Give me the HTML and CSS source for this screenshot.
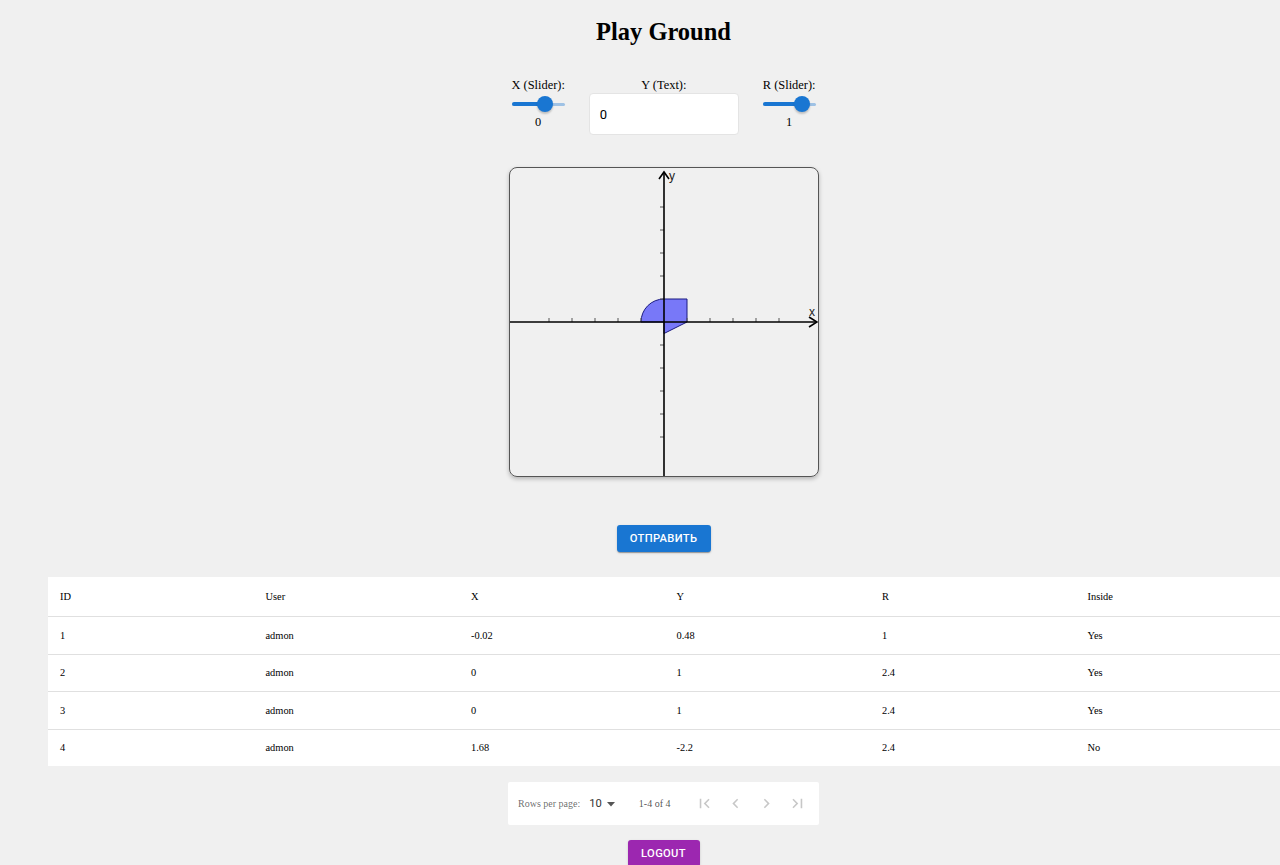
FILE: index.html
```html
<!DOCTYPE html>
<html lang="ru">
<head>
<meta charset="utf-8">
<title>Play Ground</title>
<link rel="stylesheet" href="styles.css">
</head>
<body>
<div class="page">
  <h1 class="title">Play Ground</h1>

  <div class="controls">
    <div class="slider-group">
      <div class="ctl-label">X (Slider):</div>
      <div class="slider">
        <div class="rail"></div>
        <div class="track" style="width:62.5%"></div>
        <div class="thumb" style="left:62.5%"></div>
      </div>
      <div class="ctl-value">0</div>
    </div>
    <div class="text-group">
      <div class="ctl-label">Y (Text):</div>
      <div class="text-field"><span>0</span></div>
    </div>
    <div class="slider-group">
      <div class="ctl-label">R (Slider):</div>
      <div class="slider">
        <div class="rail"></div>
        <div class="track" style="width:75%"></div>
        <div class="thumb" style="left:75%"></div>
      </div>
      <div class="ctl-value">1</div>
    </div>
  </div>

  <div class="graph">
    <svg width="308" height="308" viewBox="0 0 308 308" xmlns="http://www.w3.org/2000/svg">
      <path d="M154,154 L131,154 A23,23 0 0 1 154,131 L177,131 L177,154 L154,165.5 Z" fill="rgba(0,0,255,0.5)" stroke="#1a1a80" stroke-width="1"/>
      <g stroke="#555" stroke-width="1">
        <line x1="39" y1="150" x2="39" y2="154"/>
        <line x1="62" y1="150" x2="62" y2="154"/>
        <line x1="85" y1="150" x2="85" y2="154"/>
        <line x1="108" y1="150" x2="108" y2="154"/>
        <line x1="131" y1="150" x2="131" y2="154"/>
        <line x1="177" y1="150" x2="177" y2="154"/>
        <line x1="200" y1="150" x2="200" y2="154"/>
        <line x1="223" y1="150" x2="223" y2="154"/>
        <line x1="246" y1="150" x2="246" y2="154"/>
        <line x1="269" y1="150" x2="269" y2="154"/>
        <line x1="150" y1="39" x2="154" y2="39"/>
        <line x1="150" y1="62" x2="154" y2="62"/>
        <line x1="150" y1="85" x2="154" y2="85"/>
        <line x1="150" y1="108" x2="154" y2="108"/>
        <line x1="150" y1="131" x2="154" y2="131"/>
        <line x1="150" y1="177" x2="154" y2="177"/>
        <line x1="150" y1="200" x2="154" y2="200"/>
        <line x1="150" y1="223" x2="154" y2="223"/>
        <line x1="150" y1="246" x2="154" y2="246"/>
        <line x1="150" y1="269" x2="154" y2="269"/>
      </g>
      <g stroke="#000" stroke-width="1.6" fill="none">
        <line x1="0" y1="154" x2="307" y2="154"/>
        <polyline points="299,149 307,154 299,159"/>
        <line x1="154" y1="308" x2="154" y2="4"/>
        <polyline points="149,11 154,4 159,11"/>
      </g>
      <text x="299" y="148" class="axis-label">x</text>
      <text x="159" y="12" class="axis-label">y</text>
    </svg>
  </div>

  <button class="btn btn-primary">Отправить</button>

  <table class="results">
    <thead>
      <tr><th>ID</th><th>User</th><th>X</th><th>Y</th><th>R</th><th>Inside</th></tr>
    </thead>
    <tbody>
      <tr><td>1</td><td>admon</td><td>-0.02</td><td>0.48</td><td>1</td><td>Yes</td></tr>
      <tr><td>2</td><td>admon</td><td>0</td><td>1</td><td>2.4</td><td>Yes</td></tr>
      <tr><td>3</td><td>admon</td><td>0</td><td>1</td><td>2.4</td><td>Yes</td></tr>
      <tr><td>4</td><td>admon</td><td>1.68</td><td>-2.2</td><td>2.4</td><td>No</td></tr>
    </tbody>
  </table>

  <div class="pagination">
    <span class="rpp-label">Rows per page:</span>
    <span class="rpp-select">10
      <svg width="10" height="10" viewBox="0 0 10 10"><path d="M1 3 L9 3 L5 7.5 Z" fill="#555"/></svg>
    </span>
    <span class="range">1-4 of 4</span>
    <div class="nav">
      <svg class="nav-icon" viewBox="0 0 24 24"><path d="M18.41 16.59L13.82 12l4.59-4.59L17 6l-6 6 6 6zM6 6h2v12H6z"/></svg>
      <svg class="nav-icon" viewBox="0 0 24 24"><path d="M15.41 7.41L14 6l-6 6 6 6 1.41-1.41L10.83 12z"/></svg>
      <svg class="nav-icon" viewBox="0 0 24 24"><path d="M10 6L8.59 7.41 13.17 12l-4.58 4.59L10 18l6-6z"/></svg>
      <svg class="nav-icon" viewBox="0 0 24 24"><path d="M5.59 7.41L10.18 12l-4.59 4.59L7 18l6-6-6-6zM16 6h2v12h-2z"/></svg>
    </div>
  </div>

  <button class="btn btn-secondary">Logout</button>
</div>
</body>
</html>
```

FILE: styles.css
```css
html {
  overflow: hidden;
}
body {
  margin: 0;
  background: #f0f0f0;
  font-family: "Liberation Serif", "Times New Roman", serif;
  color: #000;
}
.page {
  width: 1231px;
  margin-left: 48px;
  display: flex;
  flex-direction: column;
  align-items: center;
}
.title {
  margin: 18px 0 0;
  font-size: 24.5px;
  line-height: 28px;
  font-weight: bold;
}
.controls {
  margin-top: 31px;
  display: flex;
  gap: 24px;
  align-items: flex-start;
}
.slider-group,
.text-group {
  display: flex;
  flex-direction: column;
  align-items: center;
}
.slider-group {
  align-items: stretch;
}
.ctl-label,
.ctl-value {
  font-size: 12.4px;
  line-height: 16px;
  white-space: nowrap;
  text-align: center;
}
.slider {
  position: relative;
  height: 20px;
  margin-top: 1px;
}
.rail {
  position: absolute;
  left: 0;
  right: 0;
  top: 8.5px;
  height: 3px;
  border-radius: 2px;
  background: #1976d2;
  opacity: 0.38;
}
.track {
  position: absolute;
  left: 0;
  top: 8px;
  height: 4px;
  border-radius: 2px;
  background: #1976d2;
}
.thumb {
  position: absolute;
  top: 2px;
  width: 16px;
  height: 16px;
  margin-left: -8px;
  border-radius: 50%;
  background: #1976d2;
  box-shadow: 0 2px 2px rgba(0, 0, 0, 0.2);
}
.text-field {
  width: 150px;
  height: 42px;
  box-sizing: border-box;
  background: #fff;
  border-radius: 4px;
  border: 1px solid #e4e4e4;
  display: flex;
  align-items: center;
  padding-left: 10px;
  font-family: Roboto, "Liberation Sans", sans-serif;
  font-size: 13px;
  color: #000;
}
.graph {
  margin-top: 32px;
  width: 310px;
  height: 310px;
  box-sizing: border-box;
  border: 1px solid #555;
  border-radius: 8px;
  box-shadow: 0 2px 4px rgba(0, 0, 0, 0.25);
  overflow: hidden;
}
.graph svg {
  display: block;
}
.axis-label {
  font-family: "Liberation Sans", Arial, sans-serif;
  font-size: 12px;
  fill: #222;
}
.btn {
  border: none;
  border-radius: 3px;
  color: #fff;
  font-family: Roboto, "Liberation Sans", sans-serif;
  font-weight: 500;
  font-size: 11.2px;
  letter-spacing: 0.32px;
  text-transform: uppercase;
  padding: 0 12px;
  box-shadow: 0 2px 1px -1px rgba(0, 0, 0, 0.2), 0 1px 1px 0 rgba(0, 0, 0, 0.14), 0 1px 3px 0 rgba(0, 0, 0, 0.12);
}
.btn-primary {
  margin-top: 48px;
  width: 94px;
  height: 27px;
  background: #1976d2;
}
.btn-secondary {
  margin-top: 15px;
  width: 72px;
  height: 27px;
  background: #9c27b0;
}
.results {
  margin-top: 25px;
  align-self: stretch;
  width: 1233px;
  border-collapse: collapse;
  background: #fff;
  table-layout: fixed;
  font-size: 10.4px;
}
.results th,
.results td {
  text-align: left;
  font-weight: normal;
  padding: 0 12px;
  border-bottom: 1px solid #e0e0e0;
}
.results th {
  height: 39px;
}
.results td {
  height: 36.5px;
}
.results tbody tr:last-child td {
  border-bottom: none;
}
.pagination {
  margin-top: 16px;
  width: 311px;
  height: 43px;
  box-sizing: border-box;
  background: #fff;
  border-radius: 2px;
  display: flex;
  align-items: center;
  padding-left: 10px;
  font-size: 10px;
  color: rgba(0, 0, 0, 0.6);
}
.rpp-select {
  margin-left: 9px;
  display: flex;
  align-items: center;
  gap: 4px;
  font-family: Roboto, "Liberation Sans", sans-serif;
  font-size: 11.2px;
  color: #333;
}
.range {
  margin-left: 23px;
  color: rgba(0, 0, 0, 0.7);
}
.nav {
  margin-left: 25px;
  display: flex;
  gap: 12px;
}
.nav-icon {
  width: 19px;
  height: 19px;
  fill: rgba(0, 0, 0, 0.22);
}
```
